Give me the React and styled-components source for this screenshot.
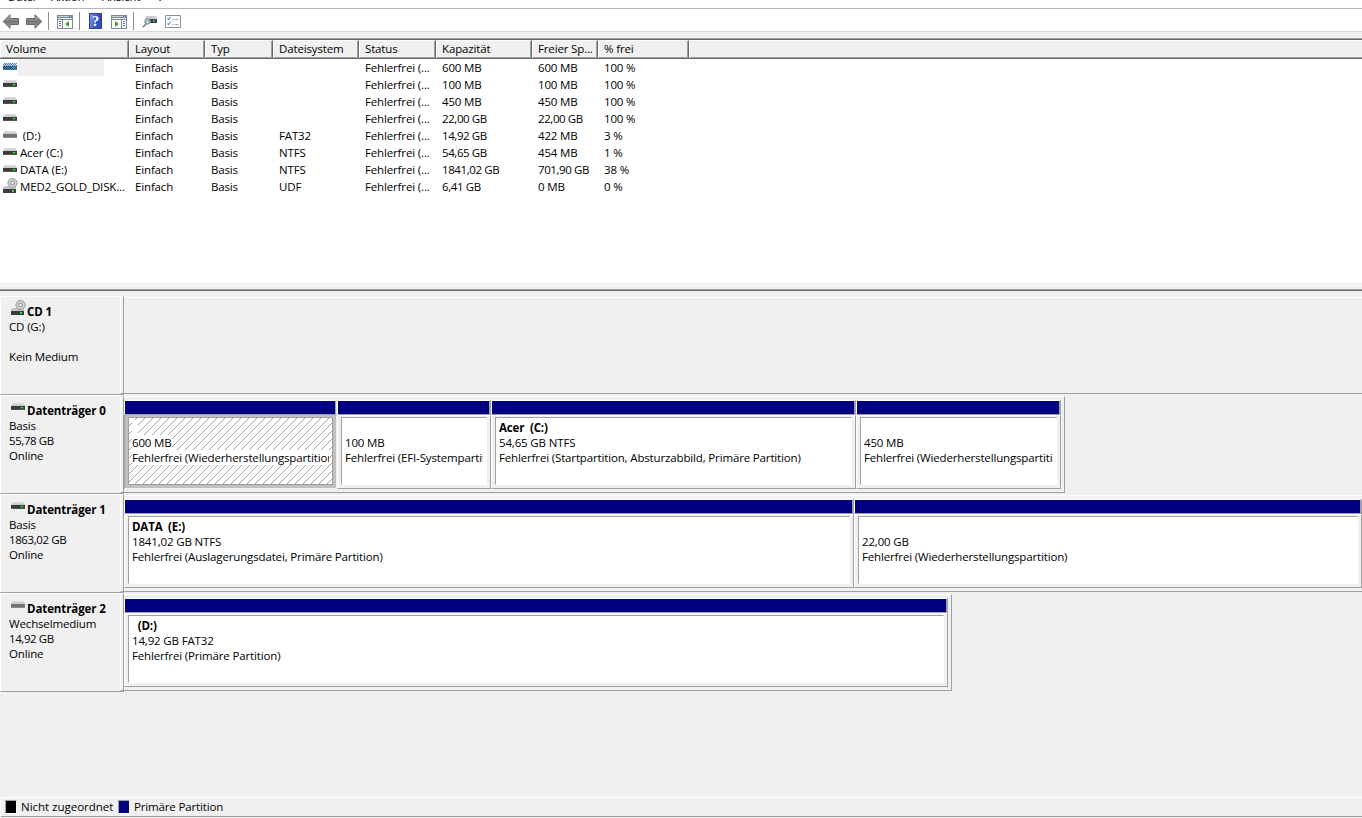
import React from "react";
import styled, { createGlobalStyle, css } from "styled-components";

const volumes = [
  { icon: "selected", name: "", fs: "", capacity: "600 MB", free: "600 MB", percent: "100 %" },
  { icon: "disk", name: "", fs: "", capacity: "100 MB", free: "100 MB", percent: "100 %" },
  { icon: "disk", name: "", fs: "", capacity: "450 MB", free: "450 MB", percent: "100 %" },
  { icon: "disk", name: "", fs: "", capacity: "22,00 GB", free: "22,00 GB", percent: "100 %" },
  { icon: "removable", name: " (D:)", fs: "FAT32", capacity: "14,92 GB", free: "422 MB", percent: "3 %" },
  { icon: "disk", name: "Acer (C:)", fs: "NTFS", capacity: "54,65 GB", free: "454 MB", percent: "1 %" },
  { icon: "disk", name: "DATA (E:)", fs: "NTFS", capacity: "1841,02 GB", free: "701,90 GB", percent: "38 %" },
  { icon: "cd", name: "MED2_GOLD_DISK...", fs: "UDF", capacity: "6,41 GB", free: "0 MB", percent: "0 %" },
];

const columns = ["Volume", "Layout", "Typ", "Dateisystem", "Status", "Kapazität", "Freier Sp...", "% frei", ""];

const disks = [
  { icon: "cd", title: "CD 1", lines: ["CD (G:)", "", "Kein Medium"], partitions: [] },
  {
    icon: "disk",
    title: "Datenträger 0",
    lines: ["Basis", "55,78 GB", "Online"],
    partitions: [
      { width: 213, name: "", size: "600 MB", status: "Fehlerfrei (Wiederherstellungspartition)", selected: true },
      { width: 154, name: "", size: "100 MB", status: "Fehlerfrei (EFI-Systempartition)" },
      {
        width: 365,
        name: "Acer  (C:)",
        size: "54,65 GB NTFS",
        status: "Fehlerfrei (Startpartition, Absturzabbild, Primäre Partition)",
      },
      { width: 205, name: "", size: "450 MB", status: "Fehlerfrei (Wiederherstellungspartition)" },
    ],
  },
  {
    icon: "disk",
    title: "Datenträger 1",
    lines: ["Basis", "1863,02 GB", "Online"],
    partitions: [
      {
        width: 730,
        name: "DATA  (E:)",
        size: "1841,02 GB NTFS",
        status: "Fehlerfrei (Auslagerungsdatei, Primäre Partition)",
      },
      { width: 508, name: "", size: "22,00 GB", status: "Fehlerfrei (Wiederherstellungspartition)" },
    ],
  },
  {
    icon: "removable",
    title: "Datenträger 2",
    lines: ["Wechselmedium", "14,92 GB", "Online"],
    partitions: [{ width: 824, name: "  (D:)", size: "14,92 GB FAT32", status: "Fehlerfrei (Primäre Partition)" }],
  },
];

// sizes with decimals are set a little tighter than the other texts
const isDecimal = (text) => /\d,\d/.test(text);

const DriveIcon = ({ type }) => (
  <svg width="16" height="16" viewBox="0 0 16 16" shapeRendering="crispEdges">
    <defs>
      <linearGradient id={`top-${type}`} x1="0" y1="0" x2="0" y2="1">
        <stop offset="0" stopColor="#dcdde0" />
        <stop offset="1" stopColor="#bfc1c5" />
      </linearGradient>
      <pattern id="dither" width="2" height="2" patternUnits="userSpaceOnUse">
        <path d="M0 0h1v1H0zM1 1h1v1H1z" fill="#3a86d8" />
      </pattern>
    </defs>
    {type === "cd" ? (
      <>
        <path d="M2 8h12v3H1z" fill="#c3c5c9" />
        <path d="M1 11h13v4H1z" fill="#3b3b3b" />
        <path d="M10 12h2v2h-2z" fill="#20e040" />
        <g shapeRendering="auto">
          <circle cx="10.5" cy="5" r="4.6" fill="#cdd1d3" stroke="#909497" strokeWidth=".9" />
          <circle cx="10.5" cy="5" r="1.8" fill="#f4f4f4" stroke="#85898b" strokeWidth=".9" />
        </g>
      </>
    ) : (
      <>
        <path d="M2 4h12l1 4H1z" fill={`url(#top-${type})`} />
        <path d="M1 7h14v3H1z" fill={type === "removable" ? "#737373" : "#3b3b3b"} />
        <path d="M1 10h14v1H1z" fill={type === "removable" ? "#8c8c8c" : "#555"} />
        {type !== "removable" && <path d="M11 8h2v1h-2z" fill="#20e040" />}
        {type !== "removable" && <path d="M10 8h1v1h-1zM13 8h1v1h-1zM11 9h2v1h-2z" fill="#257a30" />}
        {type === "selected" && <path d="M1 4h14v7H1z" fill="url(#dither)" />}
      </>
    )}
  </svg>
);

const ArrowIcon = ({ back }) => (
  <svg width="18" height="18" viewBox="0 0 18 18">
    <defs>
      <linearGradient id="arrow" x1="0" y1="0" x2="0" y2="1">
        <stop offset="0" stopColor="#bdbdbd" />
        <stop offset=".5" stopColor="#777" />
        <stop offset="1" stopColor="#a5a5a5" />
      </linearGradient>
    </defs>
    <path
      d="M1.2 9.500 8 2.700V6.500h8.500v6H8v3.800z"
      transform={back ? undefined : "matrix(-1 0 0 1 18 0)"}
      fill="url(#arrow)"
      stroke="#686868"
      strokeLinejoin="round"
    />
  </svg>
);

const PaneIcon = ({ flipped }) => (
  <svg width="16" height="14" viewBox="0 0 16 14" shapeRendering="crispEdges">
    <path d="M0 0h16v14H0z" fill="#7f8996" />
    <path d="M1 1h14v1H1z" fill="#c4ccd6" />
    <path d="M1 3h14v1H1z" fill="#eef1f4" />
    <path d="M1 5h14v8H1z" fill="#fff" />
    <path d="M12 1h1v1h-1zM14 1h1v1h-1z" fill="#4a6fa8" />
    {flipped ? (
      <>
        <path d="M10 5h1v8h-1z" fill="#7f8996" />
        <path d="M12 6h2v1h-2zM12 8h2v1h-2zM12 10h2v1h-2z" fill="#4779c4" />
        <path d="M4 6v6l4-3z" fill="#3ba52c" shapeRendering="auto" />
      </>
    ) : (
      <>
        <path d="M5 5h1v8H5z" fill="#7f8996" />
        <path d="M2 6h2v1H2zM2 8h2v1H2zM2 10h2v1H2z" fill="#4779c4" />
        <path d="M12 6v6L8 9z" fill="#3ba52c" shapeRendering="auto" />
      </>
    )}
  </svg>
);

const RescanIcon = () => (
  <svg width="16" height="14" viewBox="0 0 16 14">
    <path d="M4 2h10l1 3H3z" fill="#c9ccd0" />
    <path d="M3 5h12v4H3z" fill="#404346" />
    <path d="M11 6h2v1.500h-2z" fill="#20e040" />
    <path d="M1 13.200 4 10" stroke="#6e7f8e" strokeWidth="1.6" />
    <circle cx="5.500" cy="7.500" r="2.700" fill="#a9c9dd" stroke="#7b8e9c" />
  </svg>
);

const ChecklistIcon = () => (
  <svg width="16" height="13" viewBox="0 0 16 13">
    <path d="M.5.5h15v12H.5z" fill="#fff" stroke="#8a929d" />
    <path d="m2.500 3.500 1 1 2-2.500M2.500 8.500l1 1 2-2.500" fill="none" stroke="#3285d0" strokeWidth="1.1" />
    <path d="M7.500 4.500H9M10 4.500h3.500M7.500 9.500H9M10 9.500h3.500" stroke="#9aa3ad" />
  </svg>
);

const App = () => (
  <>
    <GlobalStyle />
    <Window>
      <MenuBar>
        <MenuItem $width={43}>Datei</MenuItem>
        <MenuItem $width={51}>Aktion</MenuItem>
        <MenuItem $width={56}>Ansicht</MenuItem>
        <MenuItem>?</MenuItem>
      </MenuBar>
      <Toolbar>
        <Tool $width={23}>
          <ArrowIcon back />
        </Tool>
        <Tool $width={23}>
          <ArrowIcon />
        </Tool>
        <Separator $gap={8} />
        <Tool $width={22} $drop={2}>
          <PaneIcon />
        </Tool>
        <Separator $gap={9} />
        <Tool $width={22}>
          <HelpBox>?</HelpBox>
        </Tool>
        <Tool $width={22} $drop={2}>
          <PaneIcon flipped />
        </Tool>
        <Separator $gap={8} />
        <Tool $width={23}>
          <RescanIcon />
        </Tool>
        <Tool $width={18}>
          <ChecklistIcon />
        </Tool>
      </Toolbar>

      <VolumeList>
        <HeaderRow>
          {columns.map((column) => (
            <HeaderCell key={column}>{column}</HeaderCell>
          ))}
        </HeaderRow>
        {volumes.map((volume, index) => (
          <VolumeRow key={index}>
            <VolumeName>
              <DriveIcon type={volume.icon} />
              <NameText $selected={volume.icon === "selected"}>{volume.name}</NameText>
            </VolumeName>
            <Cell>Einfach</Cell>
            <Cell>Basis</Cell>
            <Cell>{volume.fs}</Cell>
            <Cell>Fehlerfrei (...</Cell>
            <Cell $tight={isDecimal(volume.capacity)}>{volume.capacity}</Cell>
            <Cell $tight={isDecimal(volume.free)}>{volume.free}</Cell>
            <Cell>{volume.percent}</Cell>
          </VolumeRow>
        ))}
      </VolumeList>
      <Splitter />

      <DiskView>
        {disks.map((disk) => (
          <DiskRow key={disk.title}>
            <DiskLabel>
              <DiskTitle>
                <DriveIcon type={disk.icon} />
                <span>{disk.title}</span>
              </DiskTitle>
              {disk.lines.map((line, index) => (
                <TextLine key={index} $tight={isDecimal(line)}>
                  {line}
                </TextLine>
              ))}
            </DiskLabel>
            <Gutter />
            <DiskGraph $empty={!disk.partitions.length}>
              {disk.partitions.map((partition, index) => (
                <Partition key={index} $width={partition.width}>
                  <PartitionBar $selected={partition.selected} />
                  <PartitionBody $selected={partition.selected}>
                    <PartitionInfo $selected={partition.selected}>
                      <TextLine $bold>
                        <mark>{partition.name || "  "}</mark>
                      </TextLine>
                      <TextLine>
                        <mark>{partition.size}</mark>
                      </TextLine>
                      <TextLine>
                        <mark>{partition.status}</mark>
                      </TextLine>
                    </PartitionInfo>
                  </PartitionBody>
                </Partition>
              ))}
            </DiskGraph>
          </DiskRow>
        ))}
      </DiskView>

      <Legend>
        <Swatch $color="#000" />
        <LegendText $width={101}>Nicht zugeordnet</LegendText>
        <Swatch $color="#000080" />
        <LegendText>Primäre Partition</LegendText>
      </Legend>
    </Window>
  </>
);

const GlobalStyle = createGlobalStyle`
  * {
    box-sizing: border-box;
  }

  body {
    margin: 0;
    overflow: hidden;
    background: #f0f0f0;
    color: #000;
    font-family: "Open Sans", "Noto Sans", sans-serif;
    font-size: 11.5px;
    letter-spacing: -0.15px;
    line-height: 15px;
  }

  svg {
    display: block;
    flex: none;
  }
`;

const Window = styled.div`
  display: flex;
  flex-direction: column;
  width: 1362px;
  height: 818px;
  overflow: hidden;
`;

const MenuBar = styled.div`
  display: flex;
  align-items: flex-end;
  height: 9px;
  flex: none;
  padding: 0 0 4px 8px;
  overflow: hidden;
  background: #fff;
  border-bottom: 1px solid #b5b5b5;
`;

const MenuItem = styled.div`
  width: ${(props) => (props.$width ? `${props.$width}px` : "auto")};
`;

const Toolbar = styled.div`
  display: flex;
  align-items: center;
  height: 23px;
  flex: none;
  padding: 2px 0 0 2px;
  background: #fff;
  border-bottom: 1px solid #d9d9d9;
`;

const Tool = styled.div`
  display: flex;
  width: ${(props) => props.$width}px;
  padding-top: ${(props) => props.$drop || 0}px;
`;

const Separator = styled.div`
  width: 1px;
  height: 18px;
  margin-right: ${(props) => props.$gap}px;
  background: #8d8d8d;
`;

const HelpBox = styled.div`
  display: flex;
  align-items: center;
  justify-content: center;
  width: 13px;
  height: 16px;
  border: 1px solid #2c3f8f;
  background: linear-gradient(100deg, #7d9be6, #2f4fc0 60%);
  color: #fff;
  font: bold 15px "Liberation Serif", serif;
`;

const VolumeList = styled.div`
  flex: none;
  height: 245px;
  margin-top: 6px;
  background: #fff;
  border-top: 1px solid #a0a0a0;
  box-shadow: inset 0 1px #696969;
`;

const grid = css`
  display: grid;
  grid-template-columns: 129px 76px 68px 86px 77px 96px 66px 91px 1fr;
`;

const HeaderRow = styled.div`
  ${grid}
  height: 20px;
  padding-top: 1px;
  border-bottom: 1px solid #696969;
`;

const HeaderCell = styled.div`
  padding-left: 5px;
  background: #f0f0f0;
  border: 1px solid;
  border-color: #fff #696969 #a0a0a0 #fff;
  box-shadow: inset -1px 0 #a0a0a0;
  white-space: nowrap;

  &:last-child {
    border-right: 0;
    box-shadow: none;
  }
`;

const VolumeRow = styled.div`
  ${grid}
  height: 17px;
`;

const Cell = styled.div`
  padding: 1px 0 0 6px;
  white-space: pre;
  letter-spacing: ${(props) => (props.$tight ? "-0.4px" : "inherit")};
`;

const VolumeName = styled.div`
  display: flex;
  padding-left: 2px;
`;

const NameText = styled.div`
  width: ${(props) => (props.$selected ? "86px" : "auto")};
  height: 17px;
  padding: 1px 0 0 2px;
  background: ${(props) => (props.$selected ? "#f0f0f0" : "none")};
  white-space: pre;
`;

const Splitter = styled.div`
  flex: none;
  height: 6px;
  margin-top: 2px;
  border-top: 1px solid #fff;
  border-bottom: 1px solid #696969;
  box-shadow: inset 0 -1px #a0a0a0;
`;

const DiskView = styled.div`
  flex: 1;
  padding-top: 5px;
`;

const DiskRow = styled.div`
  display: flex;
  height: 99px;
`;

const DiskLabel = styled.div`
  flex: none;
  width: 120px;
  padding: 7px 0 0 8px;
  border: 1px solid;
  border-color: #fff transparent #a0a0a0 #fff;
  border-right: 0;
`;

const Gutter = styled.div`
  flex: none;
  width: 4px;
  height: 98px;
  border: 1px solid;
  border-color: #fff #a0a0a0 #a0a0a0 #fff;
  box-shadow: 0 1px #a0a0a0;
`;

const DiskTitle = styled.div`
  display: flex;
  height: 15px;
  padding-left: 1px;
  font-weight: bold;
  letter-spacing: -0.1px;

  svg {
    margin: -4px 1px 0 0;
  }
`;

const TextLine = styled.div`
  height: 15px;
  overflow: hidden;
  white-space: pre;
  font-weight: ${(props) => (props.$bold ? "bold" : "normal")};
  letter-spacing: ${(props) => (props.$tight ? "-0.4px" : "inherit")};

  mark {
    color: inherit;
    background: #fff;
  }
`;

const DiskGraph = styled.div`
  display: flex;
  flex: ${(props) => (props.$empty ? "1" : "none")};
  height: 97px;
  margin: 1px ${(props) => (props.$empty ? "-2px" : "0")} 0 0;
  padding: 2px 3px 0 0;
  border: 1px solid;
  border-width: 1px 1px 1px 0;
  border-color: #fff #a0a0a0 #a0a0a0;
`;

const Partition = styled.div`
  flex: none;
  width: ${(props) => props.$width}px;
  padding-top: 1px;
`;

const PartitionBar = styled.div`
  height: 15px;
  background: #000080;
  border: 1px solid;
  border-width: 1px 2px 1px 1px;
  border-color: #fff #a0a0a0 #a0a0a0 #fff;

  ${(props) =>
    props.$selected &&
    css`
      border-right: 1px solid #f0f0f0;
      box-shadow: inset -1px 0 #a0a0a0;
    `}
`;

const PartitionBody = styled.div`
  height: 74px;
  padding: 1px 3px 3px;
  background: ${(props) => (props.$selected ? "#c0c0c0" : "#f0f0f0")};
  border: 1px solid;
  border-color: ${(props) => (props.$selected ? "#c0c0c0 #f0f0f0 #f0f0f0 #a0a0a0" : "#fff #a0a0a0 #a0a0a0 #fff")};
`;

const hatch = `url("data:image/svg+xml,%3Csvg xmlns='http://www.w3.org/2000/svg' width='8' height='8' shape-rendering='crispEdges'%3E%3Cpath fill='%23a0a0a0' d='M7 0h1v1H7zM6 1h1v1H6zM5 2h1v1H5zM4 3h1v1H4zM3 4h1v1H3zM2 5h1v1H2zM1 6h1v1H1zM0 7h1v1H0z'/%3E%3C/svg%3E")`;

const PartitionInfo = styled.div`
  height: 68px;
  padding: 2px 3px 0;
  background: #fff ${(props) => (props.$selected ? hatch : "none")};
  border: 1px solid;
  border-color: ${(props) => (props.$selected ? "#a0a0a0" : "#a0a0a0 #fff #fff #a0a0a0")};
`;

const Legend = styled.div`
  display: flex;
  flex: none;
  height: 21px;
  padding: 1px 0 0 4px;
  border-top: 1px solid #fff;
  border-left: 1px solid #fff;
  border-bottom: 1px solid #f0f0f0;
  box-shadow: inset 0 -1px #a0a0a0;
`;

const Swatch = styled.div`
  width: 12px;
  height: 14px;
  margin-top: 1px;
  background: ${(props) => props.$color};
  border: 1px solid;
  border-color: #a0a0a0 #fff #fff #a0a0a0;
`;

const LegendText = styled.div`
  width: ${(props) => (props.$width ? `${props.$width}px` : "auto")};
  padding-left: 4px;
  white-space: nowrap;
  letter-spacing: ${(props) => (props.$width ? "-0.02px" : "inherit")};
`;

export default App;
